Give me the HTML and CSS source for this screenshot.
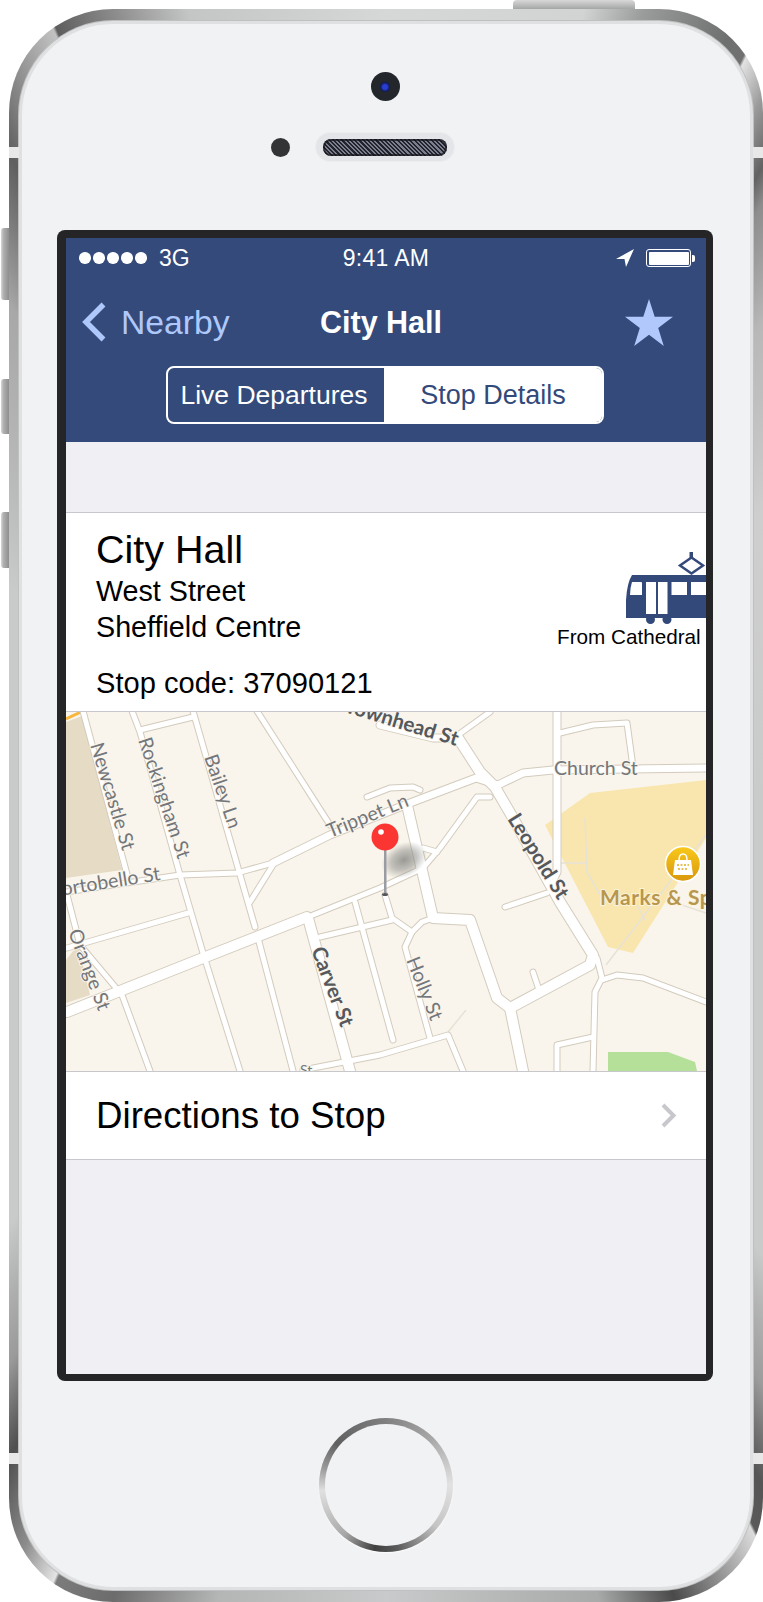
FILE: index.html
```html
<!DOCTYPE html>
<html lang="en">

<head>
    <meta charset="utf-8">
    <title>City Hall</title>
    <link rel="stylesheet" href="styles.css">
</head>

<body>
    <div class="phone">
        <!-- hardware bits stuck on the edge of the case -->
        <span class="key key-top"></span>
        <span class="key key-mute"></span>
        <span class="key key-up"></span>
        <span class="key key-down"></span>
        <span class="notch notch-lt"></span>
        <span class="notch notch-rt"></span>
        <span class="notch notch-lb"></span>
        <span class="notch notch-rb"></span>

        <div class="face">
            <div class="camera"><span class="lens"></span></div>
            <div class="ear-row">
                <span class="sensor"></span>
                <div class="speaker"><span class="mesh"></span></div>
            </div>

            <div class="bezel">
                <div class="screen">
                    <header class="top">
                        <div class="status">
                            <div class="signal">
                                <span class="dot"></span><span class="dot"></span><span class="dot"></span><span class="dot"></span><span class="dot"></span>
                                <span class="carrier">3G</span>
                            </div>
                            <div class="clock">9:41 AM</div>
                            <div class="status-right">
                                <svg class="arrow" viewBox="0 0 18 18" width="18" height="18">
                                    <path d="M18 0 L0 10 L8.5 10 L10 18 Z" fill="#fff" />
                                </svg>
                                <div class="battery"><span class="charge"></span></div>
                                <span class="battery-tip"></span>
                            </div>
                        </div>
                        <nav class="navbar">
                            <a class="back">
                                <svg viewBox="0 0 26 40" width="26" height="40">
                                    <path d="M22.5 2.5 L5 20 L22.5 37.5" fill="none" stroke="#afc8fb" stroke-width="5.5" />
                                </svg>
                                <span>Nearby</span>
                            </a>
                            <div class="title">City Hall</div>
                            <svg class="star" viewBox="0 0 48 47" width="48" height="47">
                                <path d="M24 0 L29.7 17.8 L48 17.8 L33.2 28.9 L38.8 47 L24 35.8 L9.2 47 L14.8 28.9 L0 17.8 L18.3 17.8 Z" fill="#b0c8fb" />
                            </svg>
                        </nav>
                        <div class="segments">
                            <div class="segment segment-on">Live Departures</div>
                            <div class="segment segment-off">Stop Details</div>
                        </div>
                    </header>

                    <div class="spacer"></div>

                    <section class="stop">
                        <div class="stop-text">
                            <h1>City Hall</h1>
                            <p class="addr addr-first">West Street</p>
                            <p class="addr">Sheffield Centre</p>
                            <p class="addr code">Stop code: 37090121</p>
                        </div>
                        <div class="stop-mode">
                            <svg class="tram" viewBox="626 552 80 73" width="80" height="73">
                                <g fill="#33497a">
                                    <rect x="689.5" y="552" width="3.5" height="6" />
                                    <path d="M632 575 L706 575 L706 618 L626 618 L626 600 Q627 583 632 575 Z" />
                                    <circle cx="650.5" cy="619.5" r="4.5" />
                                    <circle cx="667" cy="619.5" r="4.5" />
                                </g>
                                <path d="M691.5 557.5 L703 565.5 L691.5 573.5 L680 565.5 Z" fill="none" stroke="#33497a" stroke-width="2.5" />
                                <g fill="#fff">
                                    <path d="M632 582 L641 582 Q642 582 642 583 L642 595 L630 595 Q630 588 632 582 Z" />
                                    <rect x="646" y="582" width="10" height="32" />
                                    <rect x="658" y="582" width="9.500" height="32" />
                                    <rect x="671.500" y="582" width="15.500" height="13" />
                                    <rect x="691" y="582" width="15" height="13" />
                                </g>
                            </svg>
                            <div class="mode-label">From Cathedral</div>
                        </div>
                    </section>

                    <div class="map">
                        <svg class="map-art" viewBox="66 712 640 359" width="640" height="359">
                            <defs>
                                <g id="thin">
                                    <path d="M83 711 L128 878" />
                                    <path d="M67 895 L80 945 L122 995 L150 1071" />
                                    <path d="M140 730 L193 717" />
                                    <path d="M132 711 L140 732 L180 875 L203 953 L240 1071" />
                                    <path d="M193 711 L255 927" />
                                    <path d="M258 938 L293 1071" />
                                    <path d="M257 711 L330 825" />
                                    <path d="M66 892 L180 875 L237 873 L273 863" />
                                    <path d="M273 865 L250 902" />
                                    <path d="M67 948 L188 913" />
                                    <path d="M313 915 L380 888 L423 868 L440 848 L477 797 L490 797" />
                                    <path d="M355 902 L393 1040" />
                                    <path d="M320 937 L392 920" />
                                    <path d="M385 895 L392 918 L412 932 L405 947 L430 1038" />
                                    <path d="M412 932 L422 922 L433 918" />
                                    <path d="M303 1070 L380 1055 L448 1035 L463 1071" />
                                    <path d="M367 797 L390 788 L413 787 L420 790" />
                                    <path d="M423 848 L437 852" />
                                    <path d="M458 735 L490 712" />
                                    <path d="M560 733 L593 725 L627 723 L633 767" />
                                    <path d="M505 907 L547 893" />
                                    <path d="M533 972 L540 993" />
                                    <path d="M597 958 L602 978 L595 992 L593 1071" />
                                    <path d="M602 980 L617 975 L643 978 L706 1002" />
                                    <path d="M593 1037 L557 1045 L557 1071" />
                                </g>
                                <g id="mid">
                                    <path d="M273 863 L330 835 L410 803 L476 778 L498 785 L523 773 L553 770 L706 768" />
                                    <path d="M557 711 L557 872 L553 880" />
                                    <path d="M380 725 L433 738 L458 738" />
                                </g>
                                <g id="wide">
                                    <path d="M67 1012 L203 958 L307 917" />
                                    <path d="M308 918 L350 1071" />
                                    <path d="M458 738 L480 772 L495 787 L513 818 L560 902 L593 955 L590 965 L510 1008 L497 998 L470 920 L433 918 L407 805" />
                                    <path d="M510 1008 L523 1071" />
                                </g>
                                <radialGradient id="pin-shadow">
                                    <stop offset="0" stop-color="#8a8a86" stop-opacity="0.85" />
                                    <stop offset="0.55" stop-color="#8a8a86" stop-opacity="0.5" />
                                    <stop offset="1" stop-color="#8a8a86" stop-opacity="0" />
                                </radialGradient>
                                <linearGradient id="gold" x1="0" y1="0" x2="0" y2="1">
                                    <stop offset="0" stop-color="#f9c91a" />
                                    <stop offset="1" stop-color="#d9970c" />
                                </linearGradient>
                            </defs>

                            <rect x="66" y="712" width="640" height="359" fill="#f9f5ec" />
                            <path d="M66 722 L82 716 L122 870 L66 878 Z" fill="#e6dbc4" />
                            <path d="M66 960 L78 945 L90 995 L66 1003 Z" fill="#e6dbc4" />
                            <path d="M66 719 L81 712" stroke="#f8b73c" stroke-width="3" />
                            <path d="M545 825 L590 793 L706 780 L706 838 L633 953 L608 947 Z" fill="#f9e6ae" />
                            <path d="M608 1052 L668 1052 L695 1062 L697 1071 L608 1071 Z" fill="#b5e09a" />
                            <g class="paths">
                                <path d="M585 818 L587 872 L600 895" />
                                <path d="M561 863 L587 863" />
                                <path d="M637 905 L645 920" />
                                <path d="M706 835 L606 965" />
                                <path d="M673 902 L706 913" />
                                <path d="M448 1032 L466 1010" />
                            </g>

                            <use href="#thin" class="road-case thin" />
                            <use href="#mid" class="road-case mid" />
                            <use href="#wide" class="road-case wide" />
                            <use href="#thin" class="road-fill thin" />
                            <use href="#mid" class="road-fill mid" />
                            <use href="#wide" class="road-fill wide" />

                            <g class="labels">
                                <text transform="translate(90 745) rotate(73)">Newcastle St</text>
                                <text transform="translate(138 740) rotate(71.500)">Rockingham St</text>
                                <text transform="translate(204 757) rotate(71)">Bailey Ln</text>
                                <text transform="translate(161 880) rotate(-9)" text-anchor="end">Portobello St</text>
                                <text transform="translate(68 932) rotate(69)">Orange St</text>
                                <text transform="translate(330 838) rotate(-22)">Trippet Ln</text>
                                <text transform="translate(406 960) rotate(68)">Holly St</text>
                                <text x="554" y="775">Church St</text>
                                <text x="300" y="1075" class="small">St</text>
                                <text transform="translate(456 746) rotate(17)" text-anchor="end" class="major">Townhead St</text>
                                <text transform="translate(311 950) rotate(69)" class="major">Carver St</text>
                                <text transform="translate(507 819) rotate(58)" class="major">Leopold St</text>
                                <text x="600" y="905" class="poi">Marks &amp; Spencer</text>
                            </g>

                            <circle cx="683" cy="864" r="17.500" fill="url(#gold)" stroke="#fff" stroke-width="1.500" />
                            <path d="M675 860 L691 860 L693 875 L673 875 Z" fill="#fff" />
                            <path d="M679 860 Q679 854 683 854 Q687 854 687 860" fill="none" stroke="#fff" stroke-width="1.500" />
                            <path d="M677 865 H689 M678 869 H688" stroke="#e0ac22" stroke-width="1.500" stroke-dasharray="2 1.500" />

                            <ellipse cx="404" cy="860" rx="24" ry="17" fill="url(#pin-shadow)" transform="rotate(-25 404 860)" />
                            <rect x="384" y="849" width="2.500" height="46" fill="#9a9ca3" />
                            <ellipse cx="385" cy="894.500" rx="3" ry="1.500" fill="#55565a" />
                            <circle cx="385" cy="837" r="13.500" fill="#fb3531" />
                            <circle cx="381" cy="832" r="2.800" fill="#fff" />
                        </svg>
                    </div>

                    <a class="row">
                        <span>Directions to Stop</span>
                        <svg viewBox="0 0 16 25" width="16" height="25">
                            <path d="M2 2 L12.500 12.500 L2 23" fill="none" stroke="#c7c7cc" stroke-width="4" />
                        </svg>
                    </a>
                </div>
            </div>

            <div class="home"><span class="home-cap"></span></div>
        </div>
    </div>
</body>

</html>
```

FILE: styles.css
```css
body {
    margin: 0;
    background-color: #ffffff;
    font-family: "Liberation Sans", sans-serif;
}

.phone {
    position: relative;
    box-sizing: border-box;
    width: 754px;
    height: 1593px;
    margin: 9px 0 0 9px;
    padding: 12px 10px;
    border-radius: 104px;
    background: conic-gradient(#d6d8d7 0deg, #d2d4d3 14deg, #9a9c9b 18deg, #6e706f 24deg, #707070 25.500deg,
        #e2e2e2 25.700deg, #9a9a9a 28deg, #626262 30.500deg, #8d8d8d 32deg, #b8b8b8 38deg, #cdcecd 52deg,
        #c9caca 90deg, #c9caca 140deg, #9c9c9c 147deg, #555555 151deg, #5a5a5a 153deg, #dcdcdc 153.200deg,
        #8a8a8a 157deg, #4a4a4a 160deg, #a8aaa9 165deg, #c8cacb 180deg, #b4b6b5 192deg, #6c6c6c 199deg,
        #7c7c7c 203deg, #e4e4e4 203.200deg, #8c8c8c 206deg, #4f4f4f 210deg, #9a9a9a 214deg, #c9caca 222deg,
        #c9caca 300deg, #a8a8a8 323deg, #5f5f5f 330deg, #c2c2c2 336.800deg, #5e5e5e 337deg, #8b8b8b 341deg,
        #c4c6c5 346deg, #d6d8d7 360deg);
}

/* side and top keys */
.key {
    position: absolute;
    background: linear-gradient(to right, #d8d8d8, #b0b0b0 30%, #8e8e8e);
}

.key-top {
    top: -9px;
    left: 504px;
    width: 122px;
    height: 9px;
    border-radius: 4px 4px 0 0;
    background: linear-gradient(to bottom, #d8d8d8, #a4a6a5);
}

.key-mute {
    top: 219px;
    left: -8px;
    width: 8px;
    height: 72px;
    border-radius: 3px 0 0 3px;
}

.key-up {
    top: 370px;
    left: -8px;
    width: 8px;
    height: 55px;
    border-radius: 3px 0 0 3px;
}

.key-down {
    top: 503px;
    left: -8px;
    width: 8px;
    height: 56px;
    border-radius: 3px 0 0 3px;
}

.notch {
    position: absolute;
    width: 10px;
    height: 11px;
    background-color: #e8e8e8;
}

.notch-lt {
    top: 138px;
    left: 0;
}

.notch-rt {
    top: 138px;
    right: 0;
}

.notch-lb {
    top: 1444px;
    left: 0;
}

.notch-rb {
    top: 1444px;
    right: 0;
}

.face {
    box-sizing: border-box;
    height: 100%;
    border-radius: 94px;
    border: 3px solid #dfe0e1;
    box-shadow: 0 0 0 1px #bfc0c1;
    background-color: #f1f2f4;
    display: flex;
    flex-direction: column;
    align-items: center;
}

.camera {
    width: 29px;
    height: 29px;
    margin-top: 48px;
    margin-right: 2px;
    border-radius: 50%;
    background-color: #23262b;
    display: flex;
    align-items: center;
    justify-content: center;
}

.lens {
    width: 10px;
    height: 10px;
    border-radius: 50%;
    background: radial-gradient(#2a3fd0 30%, #0b1550 70%);
}

.ear-row {
    margin-top: 31px;
    width: 100%;
    padding-left: 249px;
    box-sizing: border-box;
    display: flex;
    align-items: center;
    gap: 25px;
}

.sensor {
    width: 19px;
    height: 19px;
    border-radius: 50%;
    background-color: #333436;
}

.speaker {
    box-sizing: border-box;
    width: 140px;
    height: 30px;
    padding: 6px 7px;
    border-radius: 15px;
    background-color: #e4e5e8;
    border: 1px solid #eceded;
}

.mesh {
    display: block;
    height: 17px;
    border-radius: 8px;
    background: repeating-linear-gradient(45deg, #22242c 0, #22242c 1.500px, #7c7e90 1.500px, #7c7e90 3px);
    box-shadow: inset 0 0 0 2px rgba(20, 20, 26, 0.7);
}

.bezel {
    margin-top: 68px;
    margin-right: 2px;
    padding: 8px 7px 7px 9px;
    border-radius: 8px;
    background-color: #252527;
}

.screen {
    width: 640px;
    height: 1136px;
    overflow: hidden;
    background-color: #efeff4;
}

.top {
    height: 204px;
    background-color: #334a7b;
    color: #ffffff;
}

.status {
    height: 40px;
    padding: 0 11px 0 13px;
    display: grid;
    grid-template-columns: 1fr auto 1fr;
    align-items: center;
    font-size: 23px;
}

.signal {
    display: flex;
    align-items: center;
    gap: 2.500px;
}

.dot {
    width: 11.500px;
    height: 11.500px;
    border-radius: 50%;
    background-color: #ffffff;
}

.carrier {
    margin-left: 10px;
}

.clock {
    margin-left: -2px;
    letter-spacing: 0.3px;
}

.status-right {
    display: flex;
    align-items: center;
    justify-content: flex-end;
}

.arrow {
    margin-right: 12px;
}

.battery {
    box-sizing: border-box;
    width: 45px;
    height: 18px;
    padding: 1.500px;
    border: 1px solid #ffffff;
    border-radius: 3px;
}

.charge {
    display: block;
    height: 100%;
    border-radius: 1px;
    background-color: #ffffff;
}

.battery-tip {
    width: 3px;
    height: 7px;
    margin-left: 1px;
    border-radius: 0 2px 2px 0;
    background-color: #ffffff;
}

.navbar {
    height: 88px;
    padding-left: 15px;
    padding-right: 33px;
    display: grid;
    grid-template-columns: 239px auto 1fr;
    align-items: center;
}

.back {
    display: flex;
    align-items: center;
    gap: 14px;
    color: #afc8fb;
    font-size: 33.700px;
}

.title {
    font-size: 30.500px;
    font-weight: bold;
}

.star {
    justify-self: end;
}

.segments {
    box-sizing: border-box;
    width: 438px;
    height: 58px;
    margin: 0 0 0 100px;
    border: 2px solid #ffffff;
    border-radius: 8px;
    overflow: hidden;
    display: flex;
}

.segment {
    display: flex;
    align-items: center;
    justify-content: center;
}

.segment-on {
    width: 216px;
    padding-right: 4px;
    box-sizing: border-box;
    font-size: 26.500px;
}

.segment-off {
    flex: 1;
    background-color: #ffffff;
    color: #33497a;
    font-size: 27px;
}

.spacer {
    height: 70px;
}

.stop {
    border-top: 1px solid #c8c7cc;
    background-color: #ffffff;
    display: flex;
    justify-content: space-between;
    height: 198px;
    overflow: hidden;
}

.stop-text {
    padding: 14px 0 0 30px;
}

.stop h1 {
    margin: 0;
    font-size: 39.500px;
    line-height: 44px;
    font-weight: normal;
}

.addr {
    margin: 0;
    font-size: 28.700px;
    line-height: 36px;
}

.addr-first {
    margin-top: 2px;
}

.addr.code {
    margin-top: 20px;
    font-size: 29.100px;
}

.stop-mode {
    width: 149px;
    padding-top: 39px;
    display: flex;
    flex-direction: column;
    align-items: flex-end;
}

.mode-label {
    align-self: flex-start;
    white-space: nowrap;
    font-size: 20.700px;
    line-height: 24px;
}

.map {
    border-top: 1px solid #c8c7cc;
    border-bottom: 1px solid #c8c7cc;
    height: 359px;
}

.map-art {
    display: block;
}

.paths path {
    fill: none;
    stroke: #e6e2d6;
    stroke-width: 1.500;
}

.road-case,
.road-fill {
    fill: none;
    stroke-linejoin: round;
    stroke-linecap: round;
}

.road-case {
    stroke: #d3cbbd;
}

.road-fill {
    stroke: #ffffff;
}

.road-case.thin {
    stroke-width: 7;
}

.road-fill.thin {
    stroke-width: 5;
}

.road-case.mid {
    stroke-width: 9;
}

.road-fill.mid {
    stroke-width: 7;
}

.road-case.wide {
    stroke-width: 12;
}

.road-fill.wide {
    stroke-width: 10;
}

.labels text {
    font-family: "Lato", sans-serif;
    font-size: 19.500px;
    fill: #73767a;
    stroke: #f9f5ec;
    stroke-width: 2px;
    paint-order: stroke;
}

.labels .small {
    font-size: 14px;
}

.labels .major {
    font-weight: bold;
    font-size: 20.500px;
    fill: #55585c;
}

.labels .poi {
    font-weight: bold;
    font-size: 21px;
    letter-spacing: 0.5px;
    fill: #b8964e;
    stroke: #fbf3da;
}

.row {
    box-sizing: border-box;
    height: 88px;
    padding: 0 29px 0 30px;
    border-bottom: 1px solid #c8c7cc;
    background-color: #ffffff;
    display: flex;
    align-items: center;
    justify-content: space-between;
    font-size: 36.700px;
}

.home {
    box-sizing: border-box;
    width: 134px;
    height: 134px;
    margin-top: 37px;
    padding: 6px;
    border-radius: 50%;
    background: conic-gradient(#808080 0deg, #a8a8a8 45deg, #e2e2e2 90deg, #c4c4c4 130deg, #5a5a5a 170deg, #404040 190deg,
        #a8a8a8 220deg, #e0e0e0 265deg, #9a9a9a 285deg, #606060 310deg, #808080 360deg);
    box-shadow: 0 1px 2px rgba(255, 255, 255, 0.8);
}

.home-cap {
    display: block;
    height: 100%;
    border-radius: 50%;
    background-color: #f1f2f4;
}
```
